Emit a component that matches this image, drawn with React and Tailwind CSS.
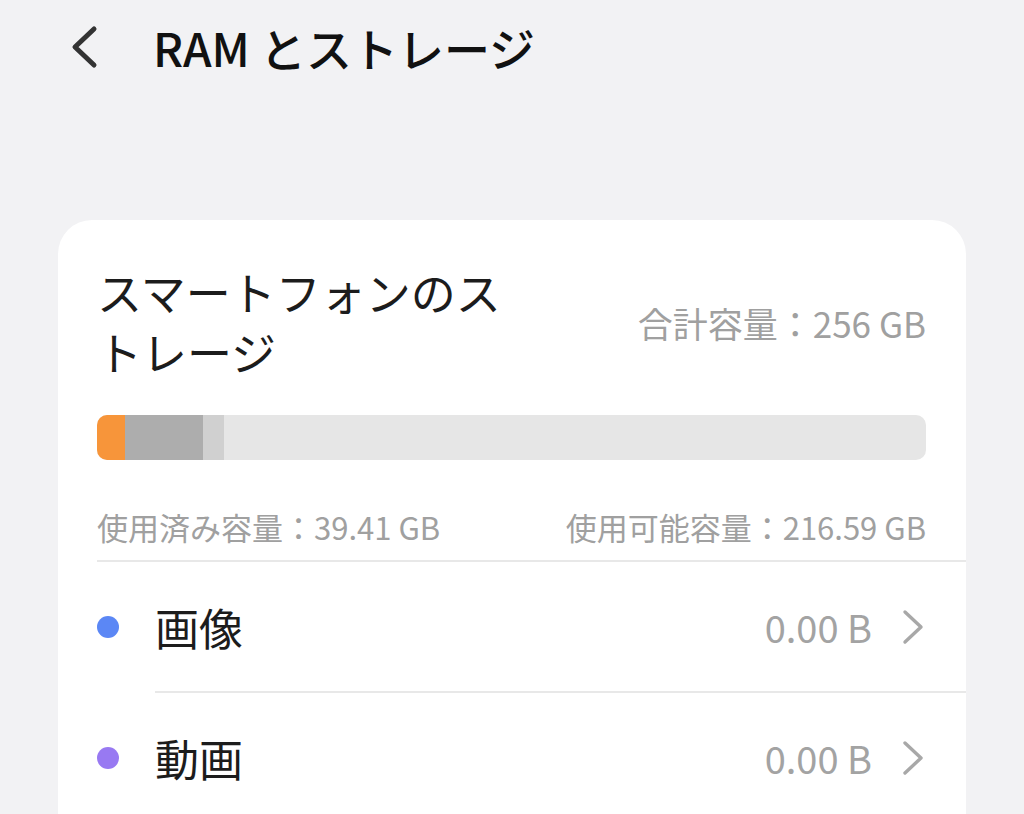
const font = { fontFamily: '"Noto Sans CJK JP", "Noto Sans", sans-serif' }

// Colored dot + label + size + chevron
function CategoryRow({ color, label, size, divider }) {
  return (
    <div className="flex flex-col">
      <div className="flex items-center h-[129px] pr-[40px]">
        <span className={`w-[22px] h-[22px] rounded-full ${color}`} />
        <span className="ml-[36px] text-[44px] leading-none text-[#1c1c1c]">{label}</span>
        <span className="ml-auto text-[38px] leading-none text-[#a3a3a3]">{size}</span>
        <svg className="ml-[28px]" width="26" height="36" viewBox="0 0 26 36" fill="none">
          <path d="M5 3 L21 18 L5 33" stroke="#a8a8a8" strokeWidth="3.4" strokeLinecap="round" strokeLinejoin="round" />
        </svg>
      </div>
      {divider && <div className="ml-[58px] h-[2px] bg-[#e8e8e8]" />}
    </div>
  )
}

export default function App() {
  return (
    <div className="w-[1024px] h-[814px] overflow-hidden bg-[#f2f2f4]" style={font}>
      {/* Header */}
      <div className="flex items-center h-[94px] pl-[68px]">
        <svg width="34" height="44" viewBox="0 0 34 44" fill="none">
          <path d="M26 4 L7 22 L26 40" stroke="#333333" strokeWidth="5" strokeLinecap="round" strokeLinejoin="round" />
        </svg>
        <h1 className="ml-[51px] text-[46px] leading-none font-medium text-[#111]">RAM とストレージ</h1>
      </div>

      {/* Storage card */}
      <div className="mx-[58px] mt-[126px] bg-white rounded-[34px] pt-[42px] pl-[39px] pb-[80px]">
        <div className="pr-[40px]">
          <div className="flex items-center justify-between">
            <h2 className="w-[430px] text-[45px] leading-[60px] text-[#1c1c1c]">スマートフォンのストレージ</h2>
            <span className="text-[35px] leading-none text-[#a0a0a0]">合計容量：256 GB</span>
          </div>

          <div className="mt-[33px] h-[45px] rounded-[10px] overflow-hidden flex bg-[#e6e6e6]">
            <div className="w-[28px] bg-[#f7953a]" />
            <div className="w-[78px] bg-[#adadad]" />
            <div className="w-[21px] bg-[#d0d0d0]" />
          </div>

          <div className="mt-[48px] flex items-center justify-between text-[31px] leading-[38px] text-[#a0a0a0]">
            <span>使用済み容量：39.41 GB</span>
            <span>使用可能容量：216.59 GB</span>
          </div>
        </div>

        <div className="mt-[14px] h-[2px] bg-[#e8e8e8]" />

        <CategoryRow color="bg-[#5b87f5]" label="画像" size="0.00 B" divider />
        <CategoryRow color="bg-[#9879f2]" label="動画" size="0.00 B" />
      </div>
    </div>
  )
}
